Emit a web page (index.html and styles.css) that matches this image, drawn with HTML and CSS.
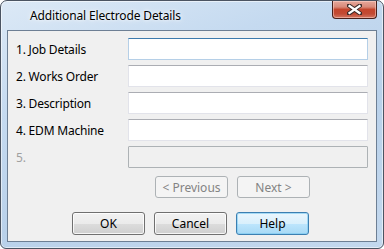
FILE: index.html
```html
<!DOCTYPE html>
<html>
<head>
<meta charset="utf-8">
<link rel="stylesheet" href="styles.css">
</head>
<body>
<div class="window">
  <div class="titlebar">
    <div class="title">Additional Electrode Details</div>
    <div class="close">
      <svg width="15" height="11" viewBox="0 0 15 11">
        <path d="M2 1.5 L13 9.5 M13 1.5 L2 9.5" stroke="#3a2a28" stroke-width="4.2" stroke-linecap="square"/>
        <path d="M2.5 2 L12.5 9 M12.5 2 L2.5 9" stroke="#ffffff" stroke-width="2.3" stroke-linecap="square"/>
      </svg>
    </div>
  </div>
  <div class="client">
    <div class="form">
      <label class="lbl">1. Job Details</label><div class="field focus"></div>
      <label class="lbl">2. Works Order</label><div class="field"></div>
      <label class="lbl">3. Description</label><div class="field"></div>
      <label class="lbl">4. EDM Machine</label><div class="field"></div>
      <label class="lbl disabled">5.</label><div class="field off"></div>
    </div>
    <div class="nav">
      <button class="btn dis">&lt; Previous</button>
      <button class="btn dis">Next &gt;</button>
    </div>
    <div class="actions">
      <button class="btn">OK</button>
      <button class="btn">Cancel</button>
      <button class="btn def">Help</button>
    </div>
  </div>
</div>
</body>
</html>
```

FILE: styles.css
```css
html, body {
  margin: 0;
  padding: 0;
  background: #ffffff;
}
body {
  font-family: "Noto Sans", "Open Sans", sans-serif;
  font-size: 12px;
  color: #000;
}
.window {
  width: 384px;
  height: 249px;
  box-sizing: border-box;
  border: 1px solid #4b5462;
  border-radius: 7px 7px 6px 6px;
  background: linear-gradient(160deg, #dce9f6 0%, #c5daf0 30%, #b9d1ea 60%, #c3d8ee 100%);
  box-shadow: inset 0 0 0 1px rgba(255,255,255,0.55);
  display: flex;
  flex-direction: column;
  padding: 0 6px 6px 6px;
  overflow: hidden;
}
.titlebar {
  height: 29px;
  display: flex;
  justify-content: space-between;
  align-items: flex-start;
}
.title {
  margin-left: 23px;
  margin-top: 6px;
  font-size: 12px;
  letter-spacing: -0.15px;
  color: #000;
  text-shadow: 0 0 6px rgba(255,255,255,0.9), 0 0 3px rgba(255,255,255,0.9);
}
.close {
  width: 45px;
  height: 18px;
  box-sizing: border-box;
  border: 1px solid #47201b;
  border-top: none;
  border-radius: 0 0 4px 4px;
  background: linear-gradient(#e7a89b 0%, #d98a7a 35%, #c4452c 50%, #c24a33 75%, #d27662 100%);
  box-shadow: inset 0 0 0 1px rgba(255,220,210,0.5);
  display: flex;
  align-items: center;
  justify-content: center;
}
.client {
  flex: 1;
  background: #f0f0f0;
  border: 1px solid #6d7f94;
  display: flex;
  flex-direction: column;
  padding: 7px 8px 0 8px;
}
.form {
  display: grid;
  grid-template-columns: 112px 240px;
  grid-auto-rows: 22px;
  row-gap: 5px;
  align-items: center;
}
.lbl {
  color: #000;
  letter-spacing: -0.2px;
}
.lbl.disabled {
  color: #a0a0a0;
}
.field {
  height: 22px;
  box-sizing: border-box;
  background: #fff;
  border: 1px solid #e2e3ea;
  border-top-color: #abadb3;
}
.field.focus {
  border-color: #b5cfe7;
  border-top-color: #3d7bad;
}
.field.off {
  background: #f0f0f0;
  border-color: #adb2b5;
  border-radius: 1px;
}
.btn {
  width: 73px;
  height: 22px;
  box-sizing: border-box;
  font-family: inherit;
  font-size: 12px;
  padding: 0;
  border: 1px solid #707070;
  border-radius: 3px;
  background: linear-gradient(#f2f2f2 0%, #ebebeb 50%, #dddddd 50%, #cfcfcf 100%);
  box-shadow: inset 0 0 0 1px rgba(255,255,255,0.8);
  color: #000;
}
.btn.dis {
  border-color: #adb2b5;
  background: #f4f4f4;
  color: #838383;
  box-shadow: none;
}
.btn.def {
  border-color: #3c7fb1;
  background: linear-gradient(#eaf6fd 0%, #d9f0fc 50%, #bee6fd 50%, #a7d9f5 100%);
  box-shadow: inset 0 0 0 1px rgba(120,200,240,0.6);
}
.nav {
  display: flex;
  gap: 9px;
  margin-top: 8px;
  margin-left: 139px;
}
.actions {
  display: flex;
  gap: 9px;
  margin-top: 14px;
  margin-left: 56px;
}
.actions .btn {
  height: 23px;
}
```
